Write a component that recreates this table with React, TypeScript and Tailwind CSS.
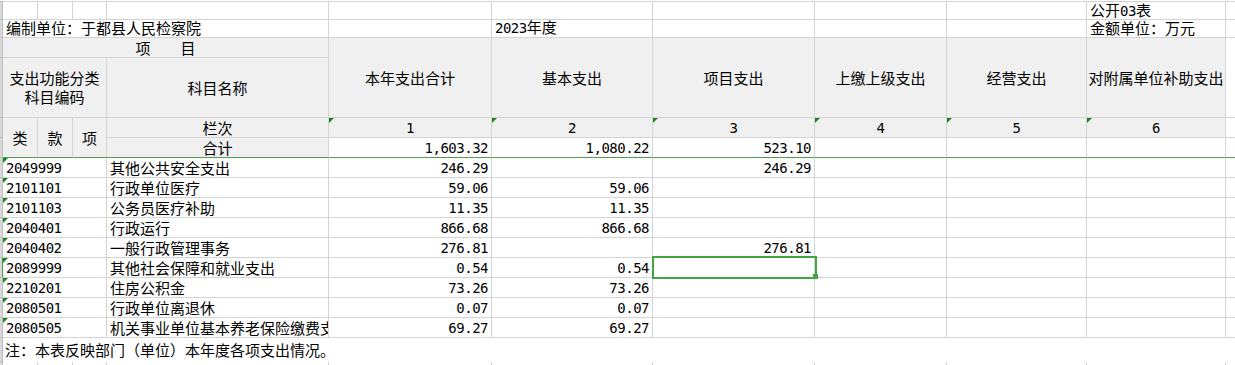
import React from "react";

const line = "border-r border-b border-[#d4d4d4]";
const cjk = "font-['Noto_Sans_CJK_SC',sans-serif] text-[15px] leading-[18px] text-black";
const mono = "font-['DejaVu_Sans_Mono',monospace] text-[14px] tracking-[-0.5px] leading-[18px] text-black";
const head = "bg-[#f0f0f0]";

type Row = { code: string; name: string; total: string; basic: string; project: string };

const rows: Row[] = [
  { code: "2049999", name: "其他公共安全支出", total: "246.29", basic: "", project: "246.29" },
  { code: "2101101", name: "行政单位医疗", total: "59.06", basic: "59.06", project: "" },
  { code: "2101103", name: "公务员医疗补助", total: "11.35", basic: "11.35", project: "" },
  { code: "2040401", name: "行政运行", total: "866.68", basic: "866.68", project: "" },
  { code: "2040402", name: "一般行政管理事务", total: "276.81", basic: "", project: "276.81" },
  { code: "2089999", name: "其他社会保障和就业支出", total: "0.54", basic: "0.54", project: "" },
  { code: "2210201", name: "住房公积金", total: "73.26", basic: "73.26", project: "" },
  { code: "2080501", name: "行政单位离退休", total: "0.07", basic: "0.07", project: "" },
  { code: "2080505", name: "机关事业单位基本养老保险缴费支出", total: "69.27", basic: "69.27", project: "" },
];

const headers = ["本年支出合计", "基本支出", "项目支出", "上缴上级支出", "经营支出", "对附属单位补助支出"];

const Strip: React.FC<{ className?: string }> = ({ className = "" }) => (
  <div className={`bg-[#d8d8d8] border-r border-b border-[#bdbdbd] ${className}`} />
);

// little green "number stored as text" marker
const Flag = () => (
  <span className="absolute left-0 top-0 w-0 h-0 border-t-[5px] border-r-[5px] border-t-[#17831d] border-r-transparent" />
);

const Num: React.FC<{ value: string; className?: string }> = ({ value, className = "" }) => (
  <div className={`${line} flex items-center justify-end pr-[3px] overflow-hidden ${className}`}>
    <span className={mono}>{value}</span>
  </div>
);

const App: React.FC = () => {
  return (
    <div className="w-[1235px] h-[365px] overflow-hidden bg-white pt-px">
      <div className="grid grid-cols-[3px_35px_35px_34px_222px_163px_161px_162px_132px_140px_139px_1fr] grid-rows-[19px_18px_20px_60px_20px_20px_repeat(9,20px)_24px_20px]">
        {/* row 0 */}
        <Strip className="border-t" />
        <div className={`${line} border-t`} />
        <div className={`${line} border-t`} />
        <div className={`${line} border-t`} />
        <div className={`${line} border-t`} />
        <div className={`${line} border-t`} />
        <div className={`${line} border-t`} />
        <div className={`${line} border-t`} />
        <div className={`${line} border-t`} />
        <div className={`${line} border-t`} />
        <div className={`${line} border-t flex items-center pl-[3px] whitespace-nowrap`}>
          <span className={`${cjk} leading-[15px]`}>
            公开<span className={`${mono} leading-[15px]`}>03</span>表
          </span>
        </div>
        <div className="border-b border-t border-[#d4d4d4]" />

        {/* row 1 */}
        <Strip />
        <div className={`${line} col-span-4 flex items-end pl-[3px] whitespace-nowrap`}>
          <span className={`${cjk} leading-[16px]`}>编制单位：于都县人民检察院</span>
        </div>
        <div className={line} />
        <div className={`${line} flex items-end pl-[3px] whitespace-nowrap`}>
          <span className={`${cjk} leading-[16px]`}>
            <span className={`${mono} leading-[16px]`}>2023</span>年度
          </span>
        </div>
        <div className={line} />
        <div className={line} />
        <div className={line} />
        <div className={`${line} flex items-end pl-[3px] whitespace-nowrap`}>
          <span className={`${cjk} leading-[16px]`}>金额单位：万元</span>
        </div>
        <div className="border-b border-[#d4d4d4]" />

        {/* row 2 + 3 : headings */}
        <Strip />
        <div className={`${line} ${head} col-span-4 flex items-center justify-center`}>
          <span className={`${cjk} whitespace-pre`}>项　　目</span>
        </div>
        {headers.map((h) => (
          <div key={h} className={`${line} ${head} row-span-2 flex items-center justify-center whitespace-nowrap`}>
            <span className={cjk}>{h}</span>
          </div>
        ))}
        <div className="row-span-2 border-b border-[#d4d4d4]" />

        <Strip />
        <div className={`${line} ${head} col-span-3 flex flex-col items-center justify-center gap-px`}>
          <span className={`${cjk} leading-[16px]`}>支出功能分类</span>
          <span className={`${cjk} leading-[16px]`}>科目编码</span>
        </div>
        <div className={`${line} ${head} flex items-center justify-center`}>
          <span className={cjk}>科目名称</span>
        </div>

        {/* row 4 */}
        <Strip />
        {["类", "款", "项"].map((t) => (
          <div key={t} className={`border-r border-b border-r-[#d4d4d4] border-b-[#4f9e4c] ${head} row-span-2 flex items-center justify-center`}>
            <span className={cjk}>{t}</span>
          </div>
        ))}
        <div className={`${line} ${head} flex items-center justify-center`}>
          <span className={cjk}>栏次</span>
        </div>
        {["1", "2", "3", "4", "5", "6"].map((n) => (
          <div key={n} className={`${line} ${head} relative flex items-center justify-center`}>
            <Flag />
            <span className={mono}>{n}</span>
          </div>
        ))}
        <div className="border-b border-[#d4d4d4]" />

        {/* row 5 : totals, frozen line below */}
        <Strip />
        <div className={`border-r border-b border-r-[#d4d4d4] border-b-[#4f9e4c] ${head} flex items-center justify-center`}>
          <span className={cjk}>合计</span>
        </div>
        <Num value="1,603.32" className="border-b-[#4f9e4c]" />
        <Num value="1,080.22" className="border-b-[#4f9e4c]" />
        <Num value="523.10" className="border-b-[#4f9e4c]" />
        <div className="border-r border-b border-r-[#d4d4d4] border-b-[#4f9e4c]" />
        <div className="border-r border-b border-r-[#d4d4d4] border-b-[#4f9e4c]" />
        <div className="border-r border-b border-r-[#d4d4d4] border-b-[#4f9e4c]" />
        <div className="border-b border-b-[#4f9e4c]" />

        {/* data rows */}
        {rows.map((r, i) => (
          <React.Fragment key={r.code}>
            <Strip className={i === 5 ? "border-r-[#3c9e3c]" : ""} />
            <div className={`${line} col-span-3 relative flex items-center pl-[3px]`}>
              <Flag />
              <span className={mono}>{r.code}</span>
            </div>
            <div className={`${line} flex items-center pl-[3px] overflow-hidden whitespace-nowrap`}>
              <span className={cjk}>{r.name}</span>
            </div>
            <Num value={r.total} />
            <Num value={r.basic} />
            <div className={`${line} relative flex items-center justify-end pr-[3px]`}>
              <span className={mono}>{r.project}</span>
              {i === 5 && (
                <>
                  <span className="absolute left-[-1px] top-[-2px] w-[165px] h-[23px] border-2 border-[#41a541] z-10" />
                  <span className="absolute left-[160px] top-[16px] w-[5px] h-[5px] bg-[#41a541] z-10" />
                </>
              )}
            </div>
            <div className={line} />
            <div className={line} />
            <div className={line} />
            <div className="border-b border-[#d4d4d4]" />
          </React.Fragment>
        ))}

        {/* note row */}
        <Strip />
        <div className="col-span-11 flex items-center pl-[2px] whitespace-nowrap">
          <span className={cjk}>注：本表反映部门（单位）本年度各项支出情况。</span>
        </div>

        {/* next empty row */}
        <Strip />
        <div className="border-r border-[#d4d4d4]" />
        <div className="border-r border-[#d4d4d4]" />
        <div className="border-r border-[#d4d4d4]" />
        <div className="border-r border-[#d4d4d4]" />
        <div className="border-r border-[#d4d4d4]" />
        <div className="border-r border-[#d4d4d4]" />
        <div className="border-r border-[#d4d4d4]" />
        <div className="border-r border-[#d4d4d4]" />
        <div className="border-r border-[#d4d4d4]" />
        <div className="border-r border-[#d4d4d4]" />
        <div />
      </div>
    </div>
  );
};

export default App;
